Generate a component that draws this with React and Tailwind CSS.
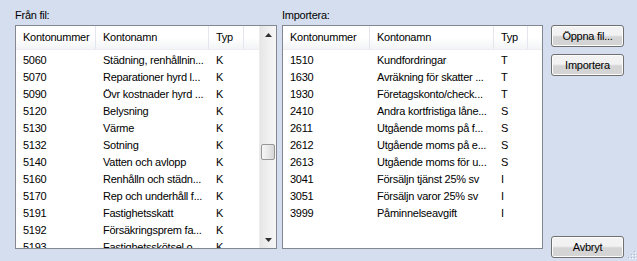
const fromRows = [
  ["5060", "Städning, renhållnin...", "K"],
  ["5070", "Reparationer hyrd l...", "K"],
  ["5090", "Övr kostnader hyrd ...", "K"],
  ["5120", "Belysning", "K"],
  ["5130", "Värme", "K"],
  ["5132", "Sotning", "K"],
  ["5140", "Vatten och avlopp", "K"],
  ["5160", "Renhålln och städn...", "K"],
  ["5170", "Rep och underhåll f...", "K"],
  ["5191", "Fastighetsskatt", "K"],
  ["5192", "Försäkringsprem fa...", "K"],
  ["5193", "Fastighetsskötsel o...", "K"],
];

const importRows = [
  ["1510", "Kundfordringar", "T"],
  ["1630", "Avräkning för skatter ...", "T"],
  ["1930", "Företagskonto/check...", "T"],
  ["2410", "Andra kortfristiga låne...", "S"],
  ["2611", "Utgående moms på f...", "S"],
  ["2612", "Utgående moms på e...", "S"],
  ["2613", "Utgående moms för u...", "S"],
  ["3041", "Försäljn tjänst 25% sv", "I"],
  ["3051", "Försäljn varor 25% sv", "I"],
  ["3999", "Påminnelseavgift", "I"],
];

function HeaderCell({ w, children }) {
  return (
    <div className={`${w} h-full flex items-center pl-[7px] border-r border-[#e3e6ec] whitespace-nowrap overflow-hidden`}>
      {children}
    </div>
  );
}

function ListView({ rows, cols }) {
  return (
    <div className="flex-1 min-w-0 overflow-hidden flex flex-col">
      {/* Column header */}
      <div className="h-[24px] shrink-0 flex bg-gradient-to-b from-white from-50% to-[#f3f4f6] border-b border-[#eceef2]">
        <HeaderCell w={cols[0]}>Kontonummer</HeaderCell>
        <HeaderCell w={cols[1]}>Kontonamn</HeaderCell>
        <HeaderCell w={cols[2]}>Typ</HeaderCell>
        <div className="flex-1" />
      </div>
      {/* Rows */}
      <div className="pt-[2px]">
        {rows.map(([nr, name, typ]) => (
          <div key={nr} className="h-[17px] flex items-center whitespace-nowrap">
            <div className={`${cols[0]} pl-[7px]`}>{nr}</div>
            <div className={`${cols[1]} pl-[7px] overflow-hidden`}>{name}</div>
            <div className={`${cols[2]} pl-[7px]`}>{typ}</div>
          </div>
        ))}
      </div>
    </div>
  );
}

function ScrollBar() {
  return (
    <div className="w-[17px] shrink-0 flex flex-col bg-gradient-to-r from-[#e6e6e6] via-[#f0f0f0] to-[#f6f6f6] border-l border-[#ececec]">
      <div className="h-[17px] flex items-center justify-center">
        <svg width="7" height="4" viewBox="0 0 7 4">
          <path d="M3.5 0 L7 4 L0 4 Z" fill="#303030" />
        </svg>
      </div>
      <div className="h-[101px]" />
      <div className="mx-[1px] h-[16px] rounded-[2px] border border-[#979797] bg-gradient-to-r from-[#f6f6f6] via-[#e9e9e9] to-[#d6d6d6]" />
      <div className="flex-1" />
      <div className="h-[17px] flex items-center justify-center">
        <svg width="7" height="4" viewBox="0 0 7 4">
          <path d="M0 0 L7 0 L3.5 4 Z" fill="#303030" />
        </svg>
      </div>
    </div>
  );
}

function Button({ children }) {
  return (
    <button className="w-[73px] h-[22px] rounded-[3px] border border-[#707070] bg-gradient-to-b from-[#f2f2f2] from-45% to-[#d4d4d4] to-55% flex items-center justify-center text-black shadow-[inset_0_0_0_1px_#fcfcfc]">
      {children}
    </button>
  );
}

export default function App() {
  return (
    <div
      className="relative w-[637px] h-[261px] overflow-hidden bg-[#d5deef] text-[11px] tracking-[-0.25px] text-black"
      style={{ fontFamily: '"Liberation Sans", Arial, sans-serif' }}
    >
      <div className="flex pl-[15px] pt-[9px]">
        {/* Från fil */}
        <div className="w-[262px] flex flex-col">
          <div className="h-[16px] leading-[13px]">Från fil:</div>
          <div className="h-[224px] flex border border-[#828790] bg-white">
            <ListView rows={fromRows} cols={["w-[80px]", "w-[113px]", "w-[35px]"]} />
            <ScrollBar />
          </div>
        </div>

        {/* Importera */}
        <div className="w-[261px] ml-[5px] flex flex-col">
          <div className="h-[16px] leading-[13px]">Importera:</div>
          <div className="h-[224px] flex border border-[#828790] bg-white">
            <ListView rows={importRows} cols={["w-[87px]", "w-[124px]", "w-[34px]"]} />
          </div>
        </div>

        {/* Buttons */}
        <div className="ml-[8px] pt-[16px] flex flex-col h-[249px]">
          <div className="flex flex-col gap-[7px]">
            <Button>Öppna fil...</Button>
            <Button>Importera</Button>
          </div>
          <div className="flex-1" />
          <Button>Avbryt</Button>
        </div>
      </div>

      {/* Size grip */}
      <svg className="absolute right-[1px] bottom-[1px]" width="10" height="10" viewBox="0 0 10 10">
        {[[8, 0], [8, 3], [5, 3], [8, 6], [5, 6], [2, 6]].map(([x, y]) => (
          <g key={`${x}-${y}`}>
            <rect x={x} y={y + 1} width="1" height="1" fill="#a9b3c4" />
            <rect x={x + 1} y={y + 2} width="1" height="1" fill="#ffffff" />
          </g>
        ))}
      </svg>
    </div>
  );
}
